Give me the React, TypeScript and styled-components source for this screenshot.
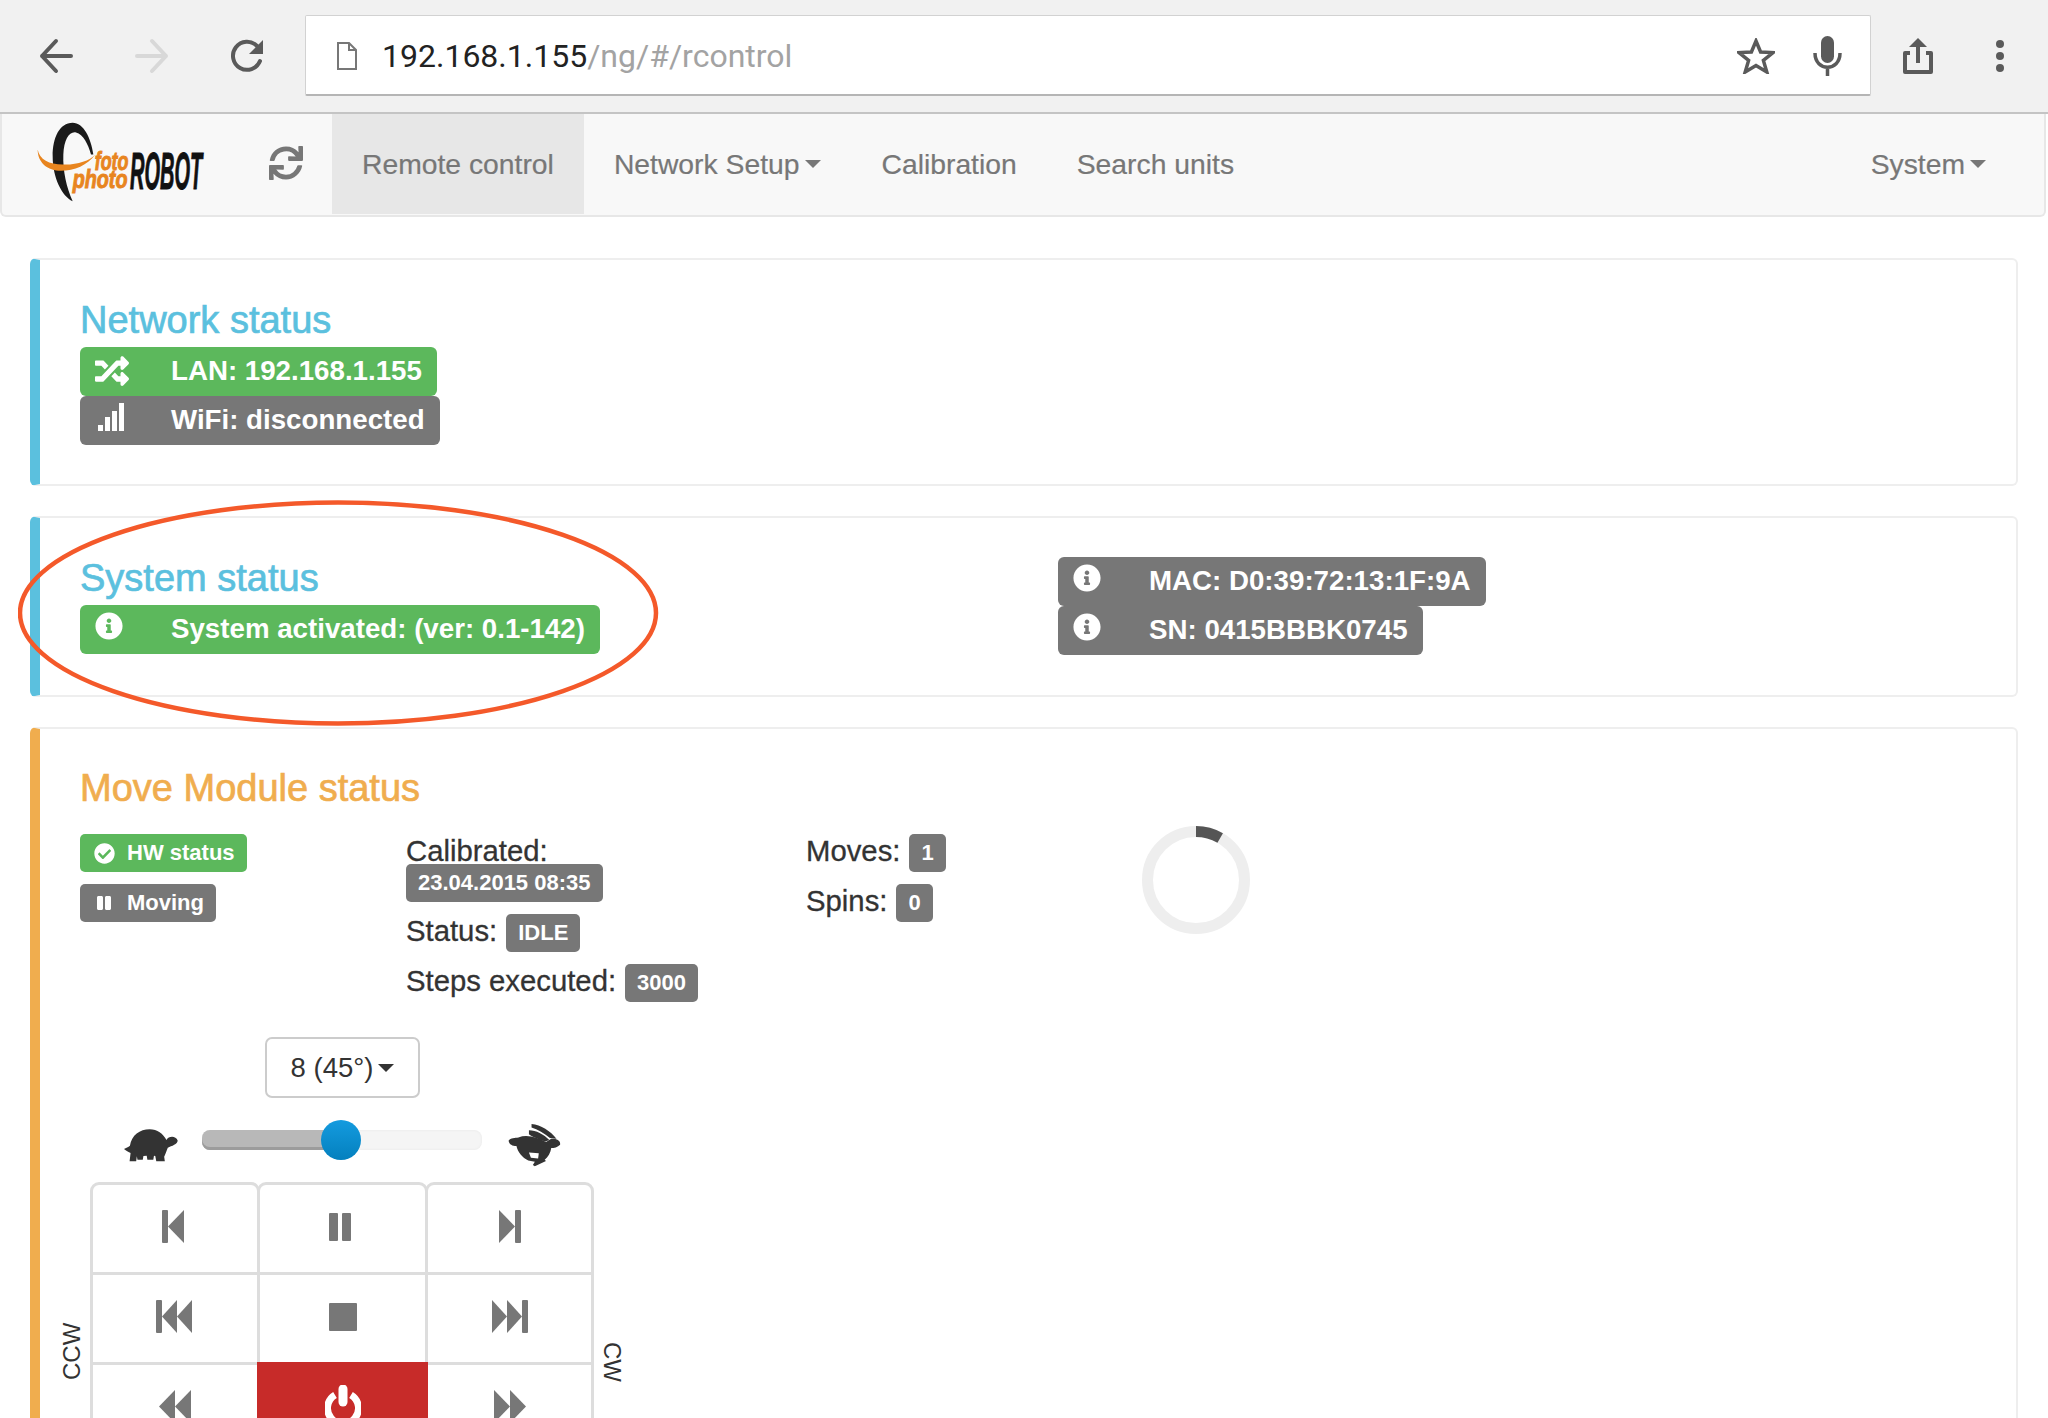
import React from "react";
import styled, { createGlobalStyle } from "styled-components";
import { FaRandom, FaInfoCircle, FaCheckCircle, FaPause, FaSync } from "react-icons/fa";

const Global = createGlobalStyle`
  html, body { margin: 0; padding: 0; background: #fff; overflow: hidden; }
  body { font-family: "Liberation Sans", Arial, sans-serif; }
  * { box-sizing: border-box; }
`;

const Page = styled.div`
  position: relative;
  width: 2048px;
  height: 1418px;
  overflow: hidden;
  background: #fff;
`;

/* browser chrome */
const Chrome = styled.header`
  display: flex;
  align-items: center;
  height: 114px;
  padding-left: 38px;
  background: #f1f1f1;
  border-bottom: 2px solid #c4c4c4;
`;
const ToolIcon = styled.svg<{ $gap?: number }>`
  flex: none;
  width: 36px;
  height: 36px;
  margin-left: ${(p) => p.$gap ?? 0}px;
`;
const AddressBar = styled.div`
  flex: none;
  display: flex;
  align-items: center;
  width: 1566px;
  height: 81px;
  margin: 0 0 2px 39px;
  padding: 2px 28px 0 31px;
  background: #fff;
  border: 1px solid #d2d2d2;
  border-bottom: 2px solid #b5b5b5;
  border-radius: 2px;
`;
const Url = styled.div`
  flex: 1;
  margin-left: 25px;
  font-family: Roboto, "Liberation Sans", sans-serif;
  font-size: 32px;
  color: #222;
`;
const UrlPath = styled.span`
  color: #a3a3a3;
`;
const BarIcon = styled.svg<{ $gap?: number }>`
  flex: none;
  margin-left: ${(p) => p.$gap ?? 0}px;
`;

/* navbar */
const Navbar = styled.nav`
  display: flex;
  align-items: stretch;
  width: 2046px;
  height: 103px;
  padding: 0 28px 0 34px;
  background: #f8f8f8;
  border: 2px solid #e7e7e7;
  border-top: none;
  border-radius: 0 0 6px 6px;
`;
const Logo = styled.svg`
  flex: none;
  align-self: flex-start;
  width: 170px;
  height: 82px;
  margin-top: 7px;
`;
const Refresh = styled.div`
  flex: none;
  display: flex;
  align-items: center;
  margin: 0 29px 4px 63px;
  color: #777;
  font-size: 34px;
`;
const NavItem = styled.a<{ $active?: boolean; $right?: boolean }>`
  display: flex;
  align-items: center;
  height: 100px;
  padding: 0 30px;
  margin-left: ${(p) => (p.$right ? "auto" : "0")};
  font-size: 28.3px;
  color: #777;
  -webkit-text-stroke: 0.2px #777;
  background: ${(p) => (p.$active ? "#e7e7e7" : "transparent")};
`;
const Caret = styled.span<{ $color?: string; $gap?: number }>`
  display: inline-block;
  width: 0;
  height: 0;
  margin-left: ${(p) => p.$gap ?? 5}px;
  border-top: 8px solid ${(p) => p.$color ?? "#777"};
  border-left: 8px solid transparent;
  border-right: 8px solid transparent;
`;

/* content */
const Content = styled.main`
  display: flex;
  flex-direction: column;
  gap: 30px;
  padding: 41px 30px 0;
`;
const Card = styled.section<{ $accent: string; $pt?: number }>`
  padding: ${(p) => p.$pt ?? 40}px 0 39px 40px;
  border: 2px solid #eee;
  border-left: 10px solid ${(p) => p.$accent};
  border-radius: 6px;
`;
const TwoColumns = styled.div`
  display: grid;
  grid-template-columns: 978px 1fr;
  margin-bottom: 1px;
`;
const MacColumn = styled.div`
  margin-top: -1px;
`;
const Title = styled.h3<{ $color: string; $mb?: number }>`
  margin: 0 0 ${(p) => p.$mb ?? 0}px;
  height: 47px;
  line-height: 40px;
  font-size: 38px;
  font-weight: 400;
  -webkit-text-stroke: 0.7px ${(p) => p.$color};
  color: ${(p) => p.$color};
`;
const BigLabel = styled.div<{ $bg: string }>`
  display: flex;
  width: fit-content;
  height: 49px;
  padding: 0 15px;
  background: ${(p) => p.$bg};
  border-radius: 6px;
  color: #fff;
  font-size: 27.7px;
  font-weight: 700;
  line-height: 47px;
`;
const BigIcon = styled.span`
  flex: none;
  width: 76px;
  height: 34px;
  margin-top: 7px;
  line-height: 0;
`;
const StatusGrid = styled.div`
  display: grid;
  grid-template-columns: 326px 400px 336px 108px;
  align-items: start;
`;
const Stack = styled.div`
  display: flex;
  flex-direction: column;
  align-items: flex-start;
  gap: 12px;
`;
const SmallLabel = styled.span<{ $bg?: string }>`
  display: inline-flex;
  align-items: center;
  height: 38px;
  padding: 0 12px;
  background: ${(p) => p.$bg ?? "#777"};
  border-radius: 5px;
  color: #fff;
  font-size: 22px;
  font-weight: 700;
  line-height: 1;
  white-space: nowrap;
`;
const SmallIcon = styled.span`
  flex: none;
  display: flex;
  align-items: center;
  justify-content: center;
  width: 35px;
  padding-right: 11px;
  font-size: 21px;
`;
const Line = styled.div`
  display: flex;
  align-items: flex-start;
  gap: 9px;
  height: 38px;
  line-height: 33px;
  font-size: 29.3px;
  color: #333;
  -webkit-text-stroke: 0.3px #333;
  white-space: nowrap;
  & > span { -webkit-text-stroke: 0; }
`;
const TextLine = styled.div`
  height: 30px;
  line-height: 34px;
  font-size: 29.3px;
  color: #333;
  -webkit-text-stroke: 0.3px #333;
`;
const CalibratedBlock = styled.div`
  display: flex;
  flex-direction: column;
  align-items: flex-start;
`;
const Ring = styled.svg`
  display: block;
  width: 108px;
  height: 108px;
  margin-top: -8px;
`;

/* controls */
const ControlPanel = styled.div`
  display: flex;
  flex-direction: column;
  align-items: center;
  width: 565px;
  margin: 35px 0 0 -20px;
`;
const StepSelect = styled.button`
  display: flex;
  align-items: center;
  justify-content: center;
  width: 155px;
  height: 61px;
  background: #fff;
  border: 2px solid #ccc;
  border-radius: 7px;
  font: 400 27.5px "Liberation Sans", Arial, sans-serif;
  color: #333;
`;
const SliderRow = styled.div`
  display: flex;
  align-items: center;
  height: 50px;
  margin-top: 22px;
`;
const Track = styled.div`
  position: relative;
  width: 280px;
  height: 20px;
  margin: 0 26px 10px 24px;
  background: #f5f5f5;
  border-radius: 8px;
  box-shadow: inset 0 0 3px rgba(0, 0, 0, 0.06);
`;
const TrackFill = styled.div`
  height: 100%;
  background: #b8b8b8;
  border-radius: 8px 0 0 8px;
  box-shadow: inset 0 -3px 0 #9c9c9c;
`;
const Thumb = styled.div`
  position: absolute;
  top: -10px;
  left: 119px;
  width: 40px;
  height: 40px;
  border-radius: 50%;
  background: linear-gradient(#149bdf, #0480be);
`;
const AnimalIcon = styled.svg`
  flex: none;
  fill: #333;
`;
const Pad = styled.div`
  display: flex;
  align-self: flex-start;
  margin-top: 12px;
`;
const SideLabel = styled.div<{ $top: number; $flip?: boolean }>`
  flex: none;
  width: 30px;
  height: 60px;
  margin-top: ${(p) => p.$top}px;
  writing-mode: vertical-rl;
  transform: ${(p) => (p.$flip ? "none" : "rotate(180deg)")};
  font-size: 24px;
  line-height: 24px;
  color: #333;
`;
const PadGrid = styled.div`
  display: grid;
  width: 504px;
  grid-template-columns: 167px 168px 166px;
  grid-auto-rows: 90px;
`;
const PadCell = styled.div<{ $danger?: boolean; $top?: boolean; $left?: number }>`
  display: flex;
  align-items: center;
  justify-content: center;
  margin-right: -3px;
  margin-bottom: -3px;
  padding: 0 ${(p) => p.$left ?? 0}px 4px 0;
  background: ${(p) => (p.$danger ? "#c72b29" : "#fff")};
  border: 3px solid ${(p) => (p.$danger ? "#c72b29" : "#ddd")};
  border-radius: ${(p) => (p.$top ? "9px 9px 0 0" : "0")};
  z-index: ${(p) => (p.$danger ? 1 : 0)};
`;
const PadIcon = styled.svg`
  display: block;
  fill: #777;
`;
const Annotation = styled.svg`
  position: absolute;
  left: 18px;
  top: 500px;
  width: 641px;
  height: 226px;
  pointer-events: none;
`;

const InfoBig = () => (
  <BigIcon>
    <FaInfoCircle size={28} />
  </BigIcon>
);

const SignalBars = () => (
  <svg width={30} height={28} viewBox="0 0 30 28" fill="#fff">
    <rect x="3" y="22" width="5" height="6" />
    <rect x="10" y="14" width="5" height="14" />
    <rect x="17" y="8" width="5" height="20" />
    <rect x="24" y="0" width="5" height="28" />
  </svg>
);

const Turtle = () => (
  <AnimalIcon width={54} height={33} viewBox="27 57 164 100">
    <path d="M27 118 C33 114 40 112 45 108 C50 76 75 58 105 58 C128 58 146 72 156 90 C162 78 184 76 190 92 C190 104 172 108 160 114 C156 124 152 136 149 141 L151 155 L125 155 L122 139 L118 138 L116 150 L98 150 L96 138 L86 139 L84 150 L68 150 L66 140 L64 155 L44 155 L47 130 C38 126 32 122 27 118 Z" />
  </AnimalIcon>
);

const Rabbit = () => (
  <AnimalIcon width={53} height={44} viewBox="1177 38 160 134">
    <path d="M1248 41 C1276 44 1306 62 1324 86 L1304 84 C1288 70 1266 58 1248 52 Z" />
    <path d="M1240 60 C1262 60 1285 72 1302 90 L1290 94 C1270 88 1250 80 1240 72 Z" />
    <path d="M1178 92 C1184 82 1198 84 1208 82 C1235 72 1265 82 1292 96 L1308 86 C1325 84 1337 92 1335 104 C1328 112 1316 114 1308 114 C1306 128 1298 142 1288 150 L1292 154 L1258 170 L1252 166 L1258 156 L1238 152 C1220 144 1206 126 1202 108 C1190 108 1180 104 1178 92 Z" />
    <path d="M1240 128 L1270 130 L1268 146 L1246 144 Z" fill="#fff" />
  </AnimalIcon>
);

const StepBack = () => (
  <PadIcon width={22} height={33} viewBox="0 0 22 33"><rect width="6" height="33" rx="1" /><polygon points="22,0 22,33 6,16.5" /></PadIcon>
);
const StepForward = () => (
  <PadIcon width={22} height={33} viewBox="0 0 22 33"><rect x="16" width="6" height="33" rx="1" /><polygon points="0,0 0,33 16,16.5" /></PadIcon>
);
const PauseIcon = () => (
  <PadIcon width={22} height={28} viewBox="0 0 22 28"><rect width="9" height="28" rx="1" /><rect x="13" width="9" height="28" rx="1" /></PadIcon>
);
const StopIcon = () => (
  <PadIcon width={28} height={28} viewBox="0 0 28 28"><rect width="28" height="28" rx="1" /></PadIcon>
);
const FastBack = () => (
  <PadIcon width={36} height={33} viewBox="0 0 36 33"><rect width="6" height="33" rx="1" /><polygon points="21,0 21,33 6,16.5" /><polygon points="36,0 36,33 21,16.5" /></PadIcon>
);
const FastForward = () => (
  <PadIcon width={36} height={33} viewBox="0 0 36 33"><rect x="30" width="6" height="33" rx="1" /><polygon points="15,0 15,33 30,16.5" /><polygon points="0,0 0,33 15,16.5" /></PadIcon>
);
const Rewind = () => (
  <PadIcon width={32} height={33} viewBox="0 0 32 33"><polygon points="16,0 16,33 0,16.5" /><polygon points="32,0 32,33 16,16.5" /></PadIcon>
);
const Forward = () => (
  <PadIcon width={32} height={33} viewBox="0 0 32 33"><polygon points="0,0 0,33 16,16.5" /><polygon points="16,0 16,33 32,16.5" /></PadIcon>
);
const Power = () => (
  <svg width={36} height={44} viewBox="0 0 36 44" fill="none" stroke="#fff" strokeWidth="7">
    <path d="M10 10 A15.5 15.5 0 1 0 26 10" />
    <line x1="18" y1="4" x2="18" y2="17" strokeLinecap="round" strokeWidth="9" />
  </svg>
);

export default function App() {
  return (
    <Page>
      <Global />
      <Chrome>
        <ToolIcon viewBox="0 0 36 36" fill="none" stroke="#5a5a5a" strokeWidth="4" strokeLinecap="round" strokeLinejoin="round">
          <path d="M33 18 H4 M18 3 L4 18 L18 33" />
        </ToolIcon>
        <ToolIcon $gap={60} viewBox="0 0 36 36" fill="none" stroke="#d8d8d8" strokeWidth="4" strokeLinecap="round" strokeLinejoin="round">
          <path d="M3 18 H32 M18 3 L32 18 L18 33" />
        </ToolIcon>
        <ToolIcon $gap={60} viewBox="0 0 36 36" fill="none" stroke="#5a5a5a" strokeWidth="4" strokeLinecap="round">
          <path d="M30 23 A14 14 0 1 1 27 8" />
          <polygon points="33,2 33,16 19,16" fill="#5a5a5a" stroke="none" />
        </ToolIcon>
        <AddressBar>
          <BarIcon width={20} height={28} viewBox="0 0 20 28" fill="none" stroke="#777" strokeWidth="2">
            <path d="M1 1 H12 L19 8 V27 H1 Z M12 1 V8 H19" />
          </BarIcon>
          <Url>
            192.168.1.155<UrlPath>/ng/#/rcontrol</UrlPath>
          </Url>
          <BarIcon width={38} height={36} viewBox="0 0 38 36" fill="none" stroke="#5a5a5a" strokeWidth="3.5" strokeLinejoin="miter">
            <polygon points="19,3 23.6,14 36,14.6 26.4,22.4 29.8,34 19,27.6 8.2,34 11.6,22.4 2,14.6 14.4,14" />
          </BarIcon>
          <BarIcon $gap={38} width={29} height={40} viewBox="0 0 29 40" fill="none" stroke="#5a5a5a">
            <rect x="8" y="0" width="13" height="27" rx="6.5" fill="#5a5a5a" stroke="none" />
            <path d="M2 17 C2 36 27 36 27 17 M14.5 31 V40" strokeWidth="3.5" />
          </BarIcon>
        </AddressBar>
        <ToolIcon $gap={29} viewBox="0 0 36 36" fill="none" stroke="#5a5a5a" strokeWidth="4" strokeLinejoin="round">
          <path d="M10 15 H5 V34 H31 V15 H26" />
          <path d="M18 25 V6" />
          <polygon points="18,0 27,9 9,9" fill="#5a5a5a" stroke="none" />
        </ToolIcon>
        <ToolIcon $gap={46} viewBox="0 0 36 36" fill="#5a5a5a">
          <circle cx="18" cy="6" r="4" />
          <circle cx="18" cy="18" r="4" />
          <circle cx="18" cy="30" r="4" />
        </ToolIcon>
      </Chrome>

      <Navbar>
        <Logo viewBox="50 50 510 245">
          <path d="M222 150 C215 100 192 55 160 55 C120 55 100 100 100 155 C100 220 128 275 160 290 C142 250 130 200 132 150 C134 105 150 80 170 84 C192 90 206 118 215 150 Z" fill="#1a1a1a" />
          <path d="M55 135 C60 165 90 180 130 180 C170 182 210 170 228 150 C205 182 165 199 125 199 C85 199 55 175 55 135 Z" fill="#e8851f" />
          <g fontFamily="'Liberation Sans', Arial, sans-serif" fontWeight="700" fontStyle="italic">
            <text transform="translate(226 196) scale(.69 1)" fontSize="78" fill="#e8851f" stroke="#e8851f" strokeWidth="3">foto</text>
            <text transform="translate(160 250) scale(.76 1)" fontSize="78" fill="#e8851f" stroke="#e8851f" strokeWidth="3">photo</text>
            <text transform="translate(332 252) scale(.385 1)" fontSize="156" fill="#111" stroke="#111" strokeWidth="3">ROBOT</text>
          </g>
        </Logo>
        <Refresh>
          <FaSync />
        </Refresh>
        <NavItem $active>Remote control</NavItem>
        <NavItem>
          Network Setup<Caret $gap={6} />
        </NavItem>
        <NavItem>Calibration</NavItem>
        <NavItem>Search units</NavItem>
        <NavItem $right>
          System<Caret />
        </NavItem>
      </Navbar>

      <Content>
        <Card $accent="#5bc0de">
          <Title $color="#5bc0de">Network status</Title>
          <BigLabel $bg="#5cb85c">
            <BigIcon>
              <FaRandom size={34} />
            </BigIcon>
            LAN: 192.168.1.155
          </BigLabel>
          <BigLabel $bg="#777">
            <BigIcon>
              <SignalBars />
            </BigIcon>
            WiFi: disconnected
          </BigLabel>
        </Card>

        <Card $accent="#5bc0de">
          <TwoColumns>
            <div>
              <Title $color="#5bc0de">System status</Title>
              <BigLabel $bg="#5cb85c">
                <InfoBig />
                System activated: (ver: 0.1-142)
              </BigLabel>
            </div>
            <MacColumn>
              <BigLabel $bg="#777">
                <InfoBig />
                MAC: D0:39:72:13:1F:9A
              </BigLabel>
              <BigLabel $bg="#777">
                <InfoBig />
                SN: 0415BBBK0745
              </BigLabel>
            </MacColumn>
          </TwoColumns>
        </Card>

        <Card $accent="#f0ad4e" $pt={39}>
          <Title $color="#f0ad4e" $mb={19}>Move Module status</Title>
          <StatusGrid>
            <Stack>
              <SmallLabel $bg="#5cb85c">
                <SmallIcon>
                  <FaCheckCircle />
                </SmallIcon>
                HW status
              </SmallLabel>
              <SmallLabel>
                <SmallIcon>
                  <FaPause size={16} />
                </SmallIcon>
                Moving
              </SmallLabel>
            </Stack>
            <Stack>
              <CalibratedBlock>
                <TextLine>Calibrated:</TextLine>
                <SmallLabel>23.04.2015 08:35</SmallLabel>
              </CalibratedBlock>
              <Line>
                Status: <SmallLabel>IDLE</SmallLabel>
              </Line>
              <Line>
                Steps executed: <SmallLabel>3000</SmallLabel>
              </Line>
            </Stack>
            <Stack>
              <Line>
                Moves: <SmallLabel>1</SmallLabel>
              </Line>
              <Line>
                Spins: <SmallLabel>0</SmallLabel>
              </Line>
            </Stack>
            <Ring viewBox="0 0 108 108" fill="none" strokeWidth="11">
              <circle cx="54" cy="54" r="48.5" stroke="#eee" />
              <path d="M54 5.5 A48.5 48.5 0 0 1 78.2 12" stroke="#555" />
            </Ring>
          </StatusGrid>

          <ControlPanel>
            <StepSelect>
              8 (45°)
              <Caret $color="#333" />
            </StepSelect>
            <SliderRow>
              <Turtle />
              <Track>
                <TrackFill style={{ width: `${(139 / 280) * 100}%` }} />
                <Thumb />
              </Track>
              <Rabbit />
            </SliderRow>
            <Pad>
              <SideLabel $top={138}>CCW</SideLabel>
              <PadGrid>
                <PadCell $top $left={5}><StepBack /></PadCell>
                <PadCell $top $left={6}><PauseIcon /></PadCell>
                <PadCell $top><StepForward /></PadCell>
                <PadCell $left={3}><FastBack /></PadCell>
                <PadCell><StopIcon /></PadCell>
                <PadCell><FastForward /></PadCell>
                <PadCell><Rewind /></PadCell>
                <PadCell $danger><Power /></PadCell>
                <PadCell><Forward /></PadCell>
              </PadGrid>
              <SideLabel $top={160} $flip>CW</SideLabel>
            </Pad>
          </ControlPanel>
        </Card>
      </Content>

      <Annotation viewBox="0 0 641 226" fill="none">
        <ellipse cx="320" cy="113" rx="318" ry="110.5" stroke="#f4592a" strokeWidth="4.5" />
      </Annotation>
    </Page>
  );
}
